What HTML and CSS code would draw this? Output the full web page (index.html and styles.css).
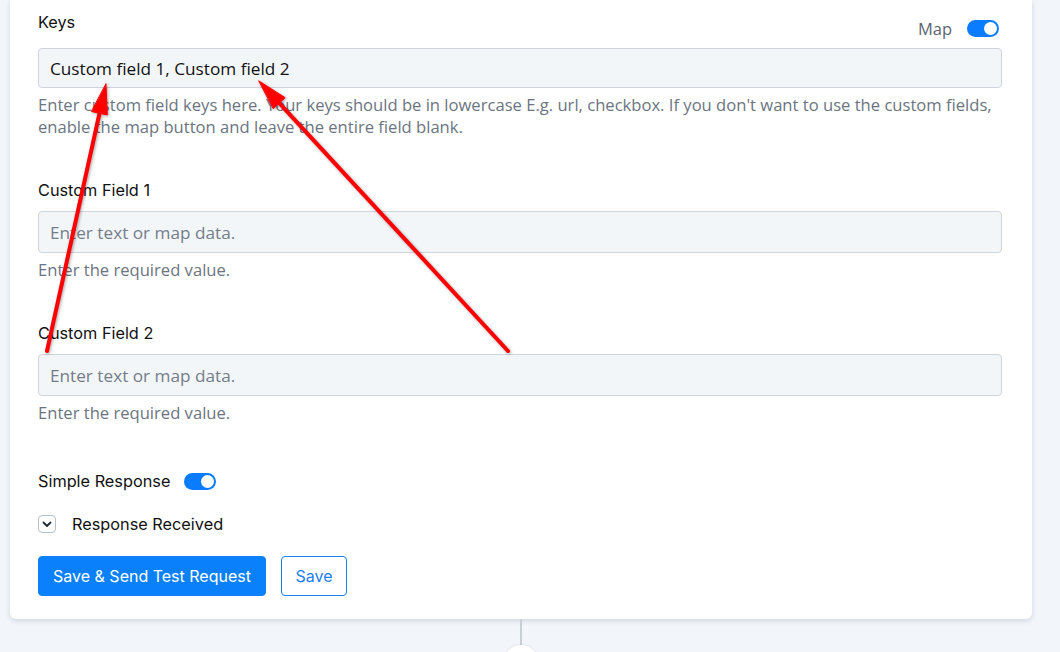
FILE: index.html
```html
<!DOCTYPE html>
<html lang="en">
<head>
<meta charset="utf-8">
<title>Custom fields</title>
<link rel="stylesheet" href="styles.css">
</head>
<body>
<div class="flow">
  <section class="card">
    <div class="field">
      <div class="field-head">
        <label class="label">Keys</label>
        <div class="map-switch">
          <span class="map-text">Map</span>
          <span class="toggle"><span class="knob"></span></span>
        </div>
      </div>
      <div class="input input-keys">Custom field 1, Custom field 2</div>
      <p class="help">Enter custom field keys here. Your keys should be in lowercase E.g. url, checkbox. If you don't want to use the custom fields, enable the map button and leave the entire field blank.</p>
    </div>

    <div class="field field-gap">
      <label class="label">Custom Field 1</label>
      <div class="input placeholder">Enter text or map data.</div>
      <p class="help">Enter the required value.</p>
    </div>

    <div class="field field-gap">
      <label class="label">Custom Field 2</label>
      <div class="input placeholder">Enter text or map data.</div>
      <p class="help">Enter the required value.</p>
    </div>

    <div class="simple-row">
      <span class="label">Simple Response</span>
      <span class="toggle"><span class="knob"></span></span>
    </div>

    <div class="received-row">
      <span class="chev-box">
        <svg width="10" height="7" viewBox="0 0 10 7"><path d="M1.5 1.5 L5 5 L8.5 1.5" fill="none" stroke="#1f2937" stroke-width="1.8" stroke-linecap="round" stroke-linejoin="round"/></svg>
      </span>
      <span class="label">Response Received</span>
    </div>

    <div class="actions">
      <button class="btn btn-primary">Save &amp; Send Test Request</button>
      <button class="btn btn-outline">Save</button>
    </div>
  </section>
  <div class="connector"></div>
  <div class="node"></div>
</div>

<svg class="annotations" width="1060" height="652" viewBox="0 0 1060 652">
  <g fill="#ff0000" stroke="#ff0000" stroke-linecap="round">
    <line x1="47" y1="351" x2="99.5" y2="113.3" stroke-width="4"/>
    <polygon points="106,84 107.3,115 91.7,111.6" stroke-width="1"/>
    <line x1="508" y1="351" x2="279.3" y2="103.1" stroke-width="4"/>
    <polygon points="259,81 285.2,97.7 273.4,108.5" stroke-width="1"/>
  </g>
</svg>
</body>
</html>
```

FILE: styles.css
```css
* { box-sizing: border-box; }

html, body {
  margin: 0;
  height: 100%;
  background: #f2f5f9;
  overflow: hidden;
}

body {
  position: relative;
  font-family: "Inter", "Lato", sans-serif;
  color: #141414;
}

.flow {
  width: 1022px;
  margin-left: 10px;
  display: flex;
  flex-direction: column;
  align-items: center;
}

.card {
  width: 100%;
  background: #ffffff;
  border-radius: 0 0 6px 6px;
  box-shadow: 0 2px 5px rgba(40, 60, 110, 0.16);
  padding: 11px 30px 23px 28px;
  display: flex;
  flex-direction: column;
}

.label {
  display: block;
  font-size: 16.3px;
  line-height: 22px;
  color: #111111;
}

.field-head {
  display: flex;
  justify-content: space-between;
  align-items: flex-start;
  height: 22px;
  margin-bottom: 15px;
}

.map-switch {
  display: flex;
  align-items: center;
  gap: 15px;
  padding-top: 6px;
  padding-right: 3px;
}

.map-text {
  font-family: "Open Sans", "Noto Sans", sans-serif;
  font-size: 16.5px;
  color: #5b6573;
}

.toggle {
  width: 32px;
  height: 17px;
  border-radius: 9px;
  background: #0a7cff;
  display: inline-flex;
  align-items: center;
  justify-content: flex-end;
  padding-right: 2px;
}

.knob {
  width: 13px;
  height: 13px;
  border-radius: 50%;
  background: #ffffff;
}

.input {
  height: 42px;
  border: 1px solid #cfd4db;
  border-radius: 4px;
  background: #f3f6f9;
  padding: 0 11px;
  display: flex;
  align-items: center;
  font-family: "Open Sans", "Noto Sans", sans-serif;
  font-size: 17.2px;
  color: #111111;
}

.input-keys { height: 40px; }

.placeholder { color: #737d8a; }

.field-gap .label { margin-bottom: 10px; }

.help {
  margin: 6px 0 0;
  font-family: "Open Sans", "Noto Sans", sans-serif;
  font-size: 16.6px;
  line-height: 22px;
  color: #6b7581;
}

.field-gap { margin-top: 41px; }

.simple-row {
  margin-top: 46px;
  display: flex;
  align-items: center;
  gap: 14px;
  height: 22px;
}

.received-row {
  margin-top: 21px;
  display: flex;
  align-items: center;
  gap: 16px;
  height: 22px;
}

.chev-box {
  width: 18px;
  height: 18px;
  border: 1px solid #b9bfc7;
  border-radius: 4px;
  display: inline-flex;
  align-items: center;
  justify-content: center;
}

.actions {
  margin-top: 21px;
  display: flex;
  gap: 15px;
}

.btn {
  height: 40px;
  border-radius: 4px;
  font-family: "Inter", "Lato", sans-serif;
  font-size: 16px;
  padding: 0 12px;
  cursor: pointer;
}

.btn-primary {
  width: 228px;
  background: #0b80fb;
  border: 1px solid #0b80fb;
  color: #ffffff;
}

.btn-outline {
  width: 66px;
  background: #ffffff;
  border: 1px solid #1a7ff0;
  color: #1a7ff0;
}

.connector {
  width: 2px;
  height: 26px;
  background: #c9ced6;
}

.node {
  width: 34px;
  height: 34px;
  border-radius: 50%;
  background: #ffffff;
  box-shadow: 0 0 3px rgba(40, 60, 110, 0.12);
}

.annotations {
  position: absolute;
  top: 0;
  left: 0;
  pointer-events: none;
  filter: drop-shadow(1px 1px 1.5px rgba(0, 0, 0, 0.35));
}
```
